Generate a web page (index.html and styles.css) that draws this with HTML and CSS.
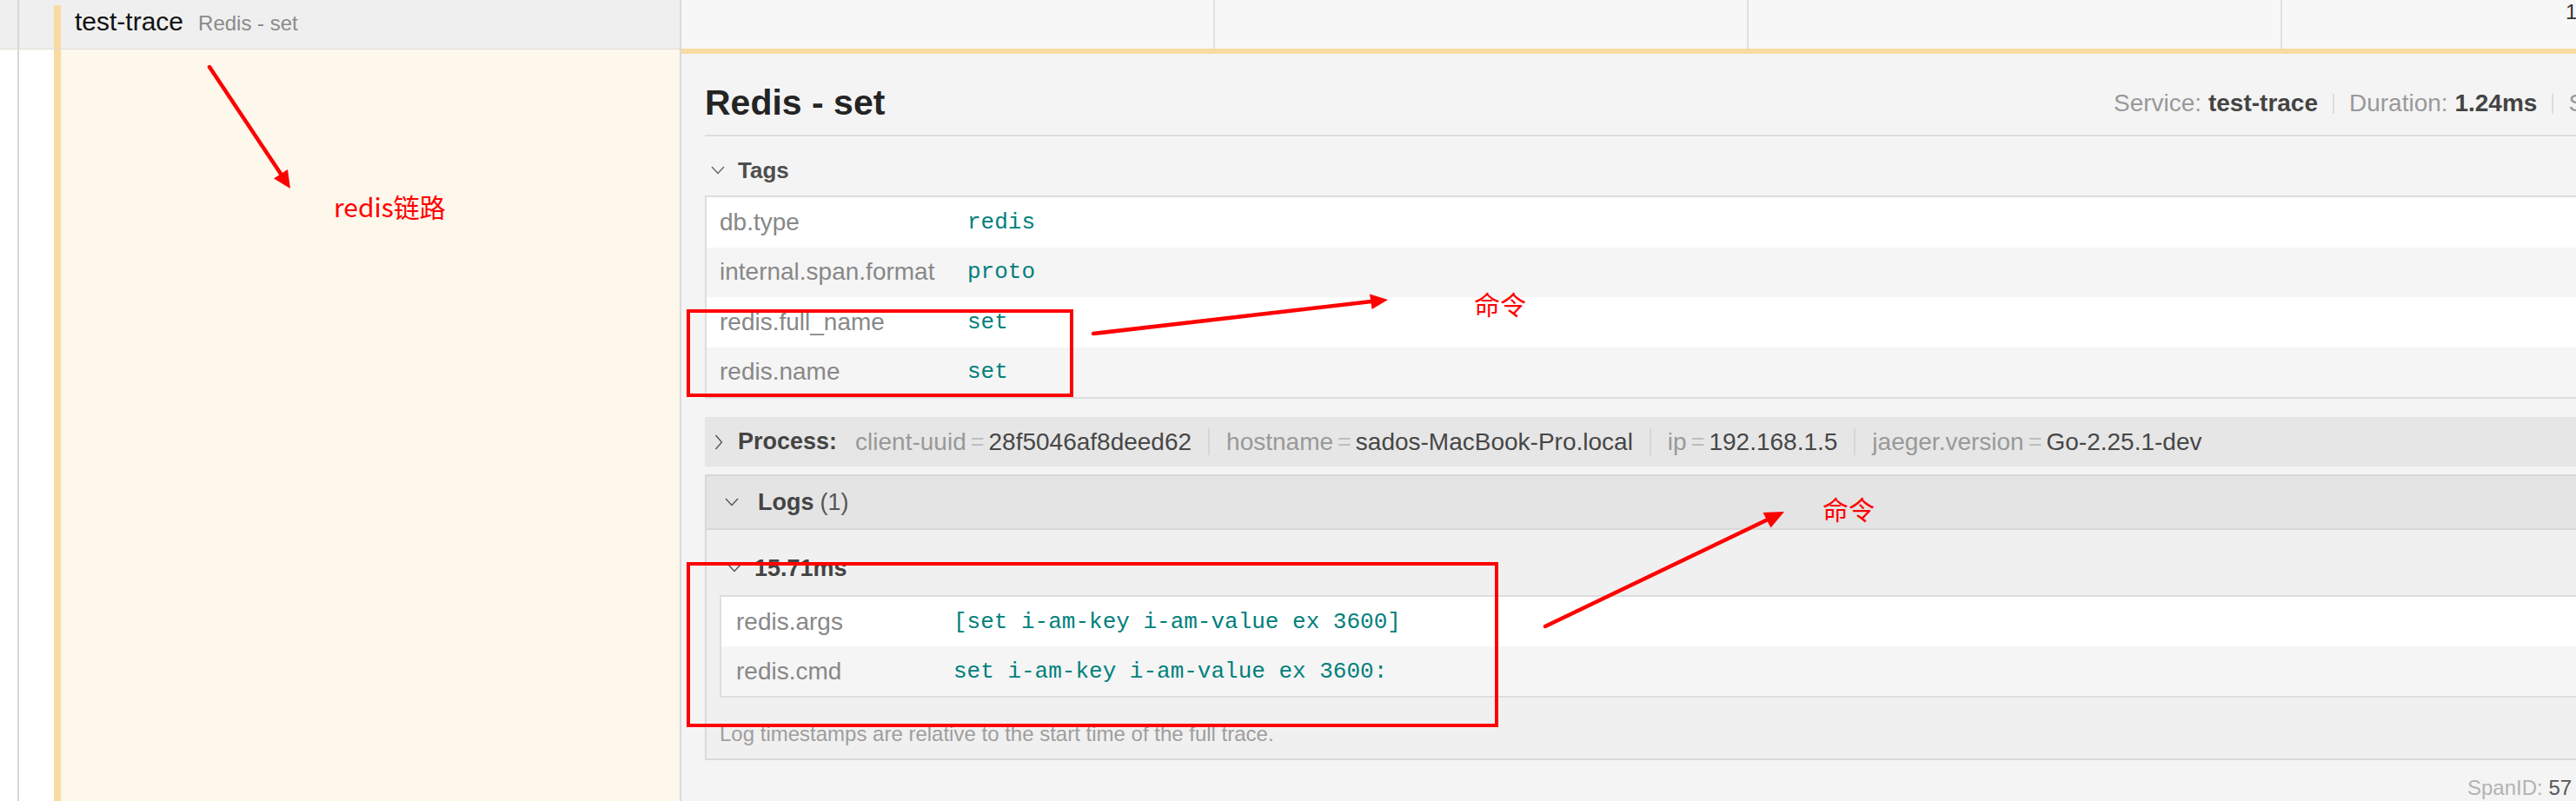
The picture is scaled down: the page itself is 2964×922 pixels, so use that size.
FILE: index.html
```html
<!DOCTYPE html>
<html>
<head>
<meta charset="utf-8">
<title>Redis - set</title>
<link rel="stylesheet" href="styles.css">
</head>
<body>
<div class="page">
  <aside class="left">
    <div class="lrow lhead">
      <div class="indent"><span class="vline"></span></div>
      <div class="bar"></div>
      <div class="name"><span class="svc">test-trace</span><span class="op">Redis - set</span></div>
    </div>
    <div class="lrow lbody">
      <div class="indent"><span class="vline"></span></div>
      <div class="bar"></div>
      <div class="fill"></div>
    </div>
  </aside>
  <main class="right">
    <div class="rhead">
      <div class="tick"></div>
      <div class="tick"></div>
      <div class="tick"></div>
      <div class="tick last"><span class="tick-label">1</span></div>
    </div>
    <div class="accent"></div>
    <div class="detail">
      <div class="title-row">
        <h2 class="title">Redis - set</h2>
        <div class="meta">
          <span class="mi"><span class="ml">Service:</span> <strong>test-trace</strong></span>
          <span class="msep"></span>
          <span class="mi"><span class="ml">Duration:</span> <strong>1.24ms</strong></span>
          <span class="msep"></span>
          <span class="mi"><span class="ml">Start Time:</span> <strong>15.71ms</strong></span>
        </div>
      </div>

      <div class="sec-head">
        <svg class="chev-down" width="16" height="10" viewBox="0 0 16 10"><polyline points="1,1 8,8.5 15,1" fill="none" stroke="#666" stroke-width="1.4"/></svg>
        <span class="sec-title">Tags</span>
      </div>
      <div class="kv tags">
        <div class="kv-row"><span class="k">db.type</span><span class="v">redis</span></div>
        <div class="kv-row"><span class="k">internal.span.format</span><span class="v">proto</span></div>
        <div class="kv-row"><span class="k">redis.full_name</span><span class="v">set</span></div>
        <div class="kv-row"><span class="k">redis.name</span><span class="v">set</span></div>
      </div>

      <div class="process">
        <svg class="chev-right" width="10" height="18" viewBox="0 0 10 18"><polyline points="1.5,1 8.5,9 1.5,17" fill="none" stroke="#555" stroke-width="1.4"/></svg>
        <span class="p-title">Process:</span>
        <span class="pi"><span class="pk">client-uuid</span><span class="eq">=</span><span class="pv">28f5046af8deed62</span></span>
        <span class="psep"></span>
        <span class="pi"><span class="pk">hostname</span><span class="eq">=</span><span class="pv">sados-MacBook-Pro.local</span></span>
        <span class="psep"></span>
        <span class="pi"><span class="pk">ip</span><span class="eq">=</span><span class="pv">192.168.1.5</span></span>
        <span class="psep"></span>
        <span class="pi"><span class="pk">jaeger.version</span><span class="eq">=</span><span class="pv">Go-2.25.1-dev</span></span>
      </div>

      <div class="logs">
        <div class="logs-head">
          <svg class="chev-down" width="16" height="10" viewBox="0 0 16 10"><polyline points="1,1 8,8.5 15,1" fill="none" stroke="#555" stroke-width="1.4"/></svg>
          <span class="lh-title">Logs</span><span class="lh-count">(1)</span>
        </div>
        <div class="logs-body">
          <div class="log-head">
            <svg class="chev-down" width="16" height="10" viewBox="0 0 16 10"><polyline points="1,1 8,8.5 15,1" fill="none" stroke="#555" stroke-width="1.4"/></svg>
            <span class="log-time">15.71ms</span>
          </div>
          <div class="kv log-kv">
            <div class="kv-row"><span class="k">redis.args</span><span class="v">[set i-am-key i-am-value ex 3600]</span></div>
            <div class="kv-row"><span class="k">redis.cmd</span><span class="v">set i-am-key i-am-value ex 3600:</span></div>
          </div>
          <div class="foot">Log timestamps are relative to the start time of the full trace.</div>
        </div>
      </div>

      <div class="spanid"><span class="sl">SpanID:</span> <span class="sv">57</span></div>
    </div>
  </main>
</div>

<svg class="marks" width="2964" height="922" viewBox="0 0 2964 922">
  <g stroke="#ff0000" stroke-width="4.5" stroke-linecap="round" fill="none">
    <line x1="241" y1="77" x2="323" y2="200"/>
    <line x1="1258" y1="384" x2="1578" y2="347"/>
    <line x1="1778" y1="721" x2="2034" y2="598"/>
  </g>
  <g fill="#ff0000">
    <polygon points="334,217 315,205.5 331,195"/>
    <polygon points="1597,345 1578.5,356 1576,338.5"/>
    <polygon points="2053,589 2037.5,607.5 2028.5,590"/>
  </g>
  <g stroke="#ff0000" stroke-width="4" fill="none">
    <rect x="792" y="358" width="441" height="97"/>
    <rect x="792" y="649" width="930" height="186"/>
  </g>
</svg>
<div class="note n1">redis链路</div>
<div class="note n2">命令</div>
<div class="note n3">命令</div>
</body>
</html>
```

FILE: styles.css
```css
html, body {
  margin: 0;
  padding: 0;
}
body {
  width: 2964px;
  height: 922px;
  overflow: hidden;
  position: relative;
  background: #fff;
  font-family: "Liberation Sans", Arial, sans-serif;
  color: #333;
}

.page {
  display: flex;
  height: 922px;
}

/* ---------- left column ---------- */
.left {
  flex: 0 0 784px;
  width: 784px;
  box-sizing: border-box;
  border-right: 2px solid #dadada;
  display: flex;
  flex-direction: column;
}
.lrow {
  display: flex;
}
.lhead {
  height: 56px;
  background: #efefef;
  border-bottom: 1px solid #e3ddd3;
}
.lbody {
  flex: 1;
}
.indent {
  flex: 0 0 62px;
  display: flex;
}
.lbody .indent {
  background: #fff;
}
.vline {
  margin-left: 20px;
  width: 2px;
  background: #d6d6d6;
}
.bar {
  flex: 0 0 8px;
  background: #f8dba0;
}
.lhead .bar {
  margin-top: 6px;
}
.name {
  display: flex;
  align-items: baseline;
  gap: 17px;
  padding: 8px 0 0 16px;
  white-space: nowrap;
}
.svc {
  font-size: 30px;
  line-height: 34px;
  color: #111;
}
.op {
  font-size: 24px;
  color: #8a8a8a;
}
.fill {
  flex: 1;
  background: #fdf7ec;
}

/* ---------- right column ---------- */
.right {
  flex: 1;
  min-width: 0;
  overflow: hidden;
  display: flex;
  flex-direction: column;
}
.rhead {
  height: 56px;
  background: #f7f7f7;
  display: flex;
}
.tick {
  flex: 0 0 614px;
  box-sizing: border-box;
  border-right: 2px solid #e0e0e0;
}
.tick.last {
  flex: 1;
  border-right: 0;
  padding: 0 0 0 326px;
  font-size: 24px;
  line-height: 28px;
  color: #333;
  white-space: nowrap;
}
.accent {
  height: 6px;
  background: #f8dba0;
}
.detail {
  flex: 1;
  width: 2400px;
  box-sizing: border-box;
  background: #f4f4f4;
  padding: 33px 0 0 27px;
}

/* title */
.title-row {
  display: flex;
  align-items: flex-end;
  border-bottom: 2px solid #dddddd;
  padding-bottom: 14px;
  white-space: nowrap;
}
.title {
  flex: 0 0 1621px;
  margin: 0;
  font-size: 41px;
  line-height: 46px;
  font-weight: bold;
  color: #242424;
}
.meta {
  display: flex;
  align-items: center;
  font-size: 28px;
  line-height: 32px;
  margin-bottom: 6px;
}
.ml {
  color: #999;
}
.mi strong {
  color: #444;
}
.msep {
  width: 2px;
  height: 23px;
  background: #dddddd;
  margin: 0 17px;
}

/* section headers */
.sec-head {
  display: flex;
  align-items: center;
  height: 30px;
  padding-top: 24px;
  margin-bottom: 14px;
}
.sec-head .chev-down {
  margin-left: 7px;
  margin-right: 15px;
}
.sec-title {
  font-size: 26px;
  font-weight: bold;
  color: #4e4e4e;
}

/* key-value tables */
.kv {
  border: 2px solid #dddddd;
}
.kv-row {
  display: flex;
  align-items: center;
  height: 57.5px;
  background: #fff;
  white-space: nowrap;
}
.kv-row:nth-child(even) {
  background: #f5f5f5;
}
.k {
  box-sizing: border-box;
  flex: 0 0 300px;
  padding-left: 15px;
  font-size: 28px;
  line-height: 32px;
  color: #888;
}
.v {
  font-family: "Liberation Mono", "Courier New", monospace;
  font-size: 26px;
  line-height: 32px;
  color: #00807c;
}

/* process */
.process {
  margin-top: 21px;
  height: 57px;
  background: #e6e6e6;
  display: flex;
  align-items: center;
  padding-left: 11px;
  white-space: nowrap;
}
.chev-right {
  margin-right: 17px;
}
.p-title {
  font-size: 27px;
  font-weight: bold;
  color: #444;
  margin-right: 21px;
}
.pi {
  display: flex;
  align-items: baseline;
}
.pk {
  font-size: 28px;
  color: #999;
}
.eq {
  font-size: 27px;
  color: #bdbdbd;
  margin: 0 5px;
}
.pv {
  font-size: 28px;
  color: #474747;
}
.psep {
  width: 2px;
  height: 31px;
  background: #d6d6d6;
  margin: 0 19px;
}

/* logs */
.logs {
  margin-top: 9px;
  border: 2px solid #d8d8d8;
}
.logs-head {
  height: 60px;
  background: #e4e4e4;
  border-bottom: 2px solid #d8d8d8;
  display: flex;
  align-items: center;
  padding-left: 21px;
}
.logs-head .chev-down {
  margin-right: 22px;
}
.lh-title {
  font-size: 27px;
  font-weight: bold;
  color: #444;
  margin-right: 7px;
}
.lh-count {
  font-size: 27px;
  color: #555;
}
.logs-body {
  background: #f0f0f0;
  padding: 29px 0 14px 0;
}
.log-head {
  display: flex;
  align-items: center;
  height: 30px;
  padding-left: 24px;
  margin-bottom: 16px;
}
.log-head .chev-down {
  margin-right: 15px;
}
.log-time {
  font-size: 27px;
  font-weight: bold;
  color: #444;
}
.log-kv {
  margin-left: 15px;
}
.log-kv .kv-row {
  height: 57px;
}
.log-kv .k {
  flex-basis: 267px;
  padding-left: 17px;
}
.foot {
  margin: 28px 0 0 15px;
  font-size: 24px;
  line-height: 28px;
  color: #9e9e9e;
}

/* span id */
.spanid {
  margin: 18px 0 0 2028px;
  font-size: 24px;
  line-height: 28px;
  white-space: nowrap;
}
.sl {
  color: #b3b3b3;
}
.sv {
  color: #555;
}

/* ---------- annotation overlay ---------- */
.marks {
  position: absolute;
  left: 0;
  top: 0;
  pointer-events: none;
}
.note {
  position: absolute;
  color: #ff0000;
  font-family: "Noto Sans CJK SC", "Liberation Sans", sans-serif;
  font-size: 30px;
  line-height: 1;
  white-space: nowrap;
}
.n1 {
  left: 384px;
  top: 222px;
}
.n2 {
  left: 1696px;
  top: 334px;
}
.n3 {
  left: 2097px;
  top: 570px;
}
```
